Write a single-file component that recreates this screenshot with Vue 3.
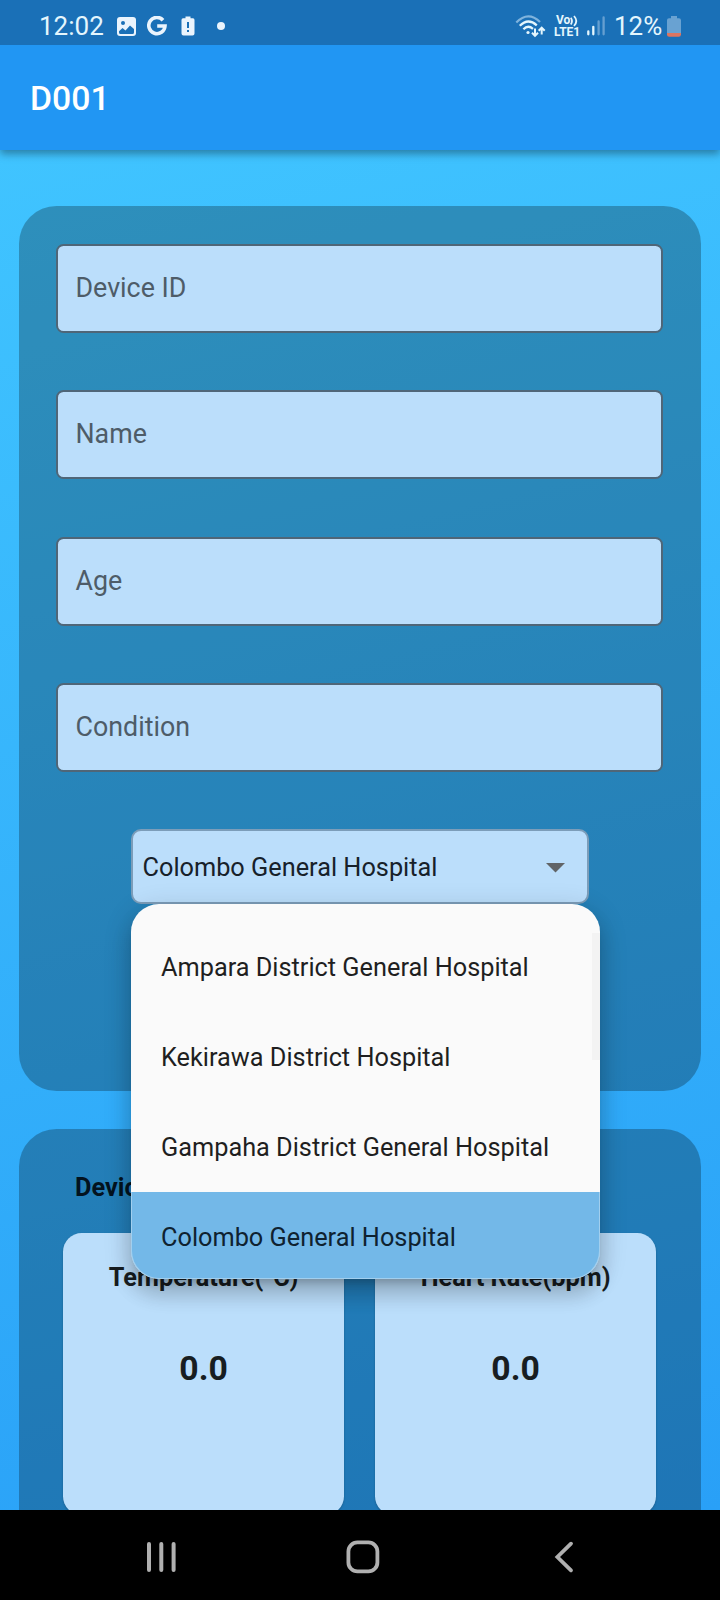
<script setup>
const fields = ['Device ID', 'Name', 'Age', 'Condition']
const selected = 'Colombo General Hospital'
const hospitals = [
  'Ampara District General Hospital',
  'Kekirawa District Hospital',
  'Gampaha District General Hospital',
  'Colombo General Hospital',
]
const readings = [
  { label: 'Temperature(°C)', value: '0.0' },
  { label: 'Heart Rate(bpm)', value: '0.0' },
]
</script>

<template>
  <div class="screen">
    <div class="status">
      <span class="clock">12:02</span>
      <svg class="ic-photo" width="19" height="19" viewBox="0 0 19 19">
        <rect width="19" height="19" rx="3" fill="#eaf4fd" />
        <circle cx="6" cy="6" r="2" fill="#1a70b7" />
        <path d="M2 14.2 L5.5 11 L8.5 13.5 L13 8.5 L17 12 V15.5 Q17 17 15.5 17 H3.5 Q2 17 2 15.5 Z" fill="#1a70b7" />
      </svg>
      <svg class="ic-g" width="20" height="20" viewBox="0 0 20 20" fill="none" stroke="#eaf4fd" stroke-width="3.6">
        <path d="M16 4.2 A8.1 8.1 0 1 0 18 10 H10.2" />
      </svg>
      <svg class="ic-alert" width="14" height="20" viewBox="0 0 14 20">
        <path d="M4.5 0.5 H9.5 V2.2 H12 Q13.5 2.2 13.5 4 V17.5 Q13.5 19.5 11.5 19.5 H2.5 Q0.5 19.5 0.5 17.5 V4 Q0.5 2.2 2 2.2 H4.5 Z" fill="#eaf4fd" />
        <path d="M7 6 V12 M7 14 V16" stroke="#1a70b7" stroke-width="2" />
      </svg>
      <span class="dot"></span>
      <span class="spacer"></span>
      <svg class="ic-wifi" width="31" height="24" viewBox="0 0 31 24" fill="none">
        <path d="M1.3 8.5 Q13 -3.5 25 8" stroke="#7fb3dd" stroke-width="2.2" />
        <path d="M4.8 11.8 Q13 3.5 21.8 11.3" stroke="#e4f6fd" stroke-width="2.3" />
        <path d="M8.4 15.3 Q13 10.6 18 14.8" stroke="#e4f6fd" stroke-width="2.3" />
        <circle cx="13" cy="18.5" r="1.6" fill="#e4f6fd" />
        <path d="M20 14.5 V22 M17 18.7 L20 21.9 L23 18.7 M26.7 20.5 V13.5 M23.7 16.8 L26.7 13.6 L29.7 16.8" stroke="#e4f6fd" stroke-width="2" />
      </svg>
      <span class="volte">
        <span class="vo">Vo<svg width="9" height="12" viewBox="0 0 9 12" fill="none" stroke="#e4f6fd" stroke-width="1.8"><path d="M0.8 2.8 Q3.2 6 0.8 9.4 M4 1 Q8.6 6 4 11" /></svg></span>
        <span class="lte">LTE1</span>
      </span>
      <svg class="ic-signal" width="19" height="20" viewBox="0 0 19 20" stroke-width="2.3" stroke-linecap="round">
        <path d="M2.3 15.5 V18.3 M7.3 10.8 V18.3" stroke="#e4f6fd" />
        <path d="M12.6 5.5 V18.3 M17.6 1.5 V18.3" stroke="#659fd1" />
      </svg>
      <span class="percent">12%</span>
      <svg class="ic-battery" width="14" height="21" viewBox="0 0 14 21">
        <path d="M4 0 H10 V2.2 H12 Q14 2.2 14 4.2 V17 H0 V4.2 Q0 2.2 2 2.2 H4 Z" fill="#69a2d2" />
        <path d="M0 17 H14 V18.5 Q14 20.7 11.8 20.7 H2.2 Q0 20.7 0 18.5 Z" fill="#dd7561" />
      </svg>
    </div>

    <header class="appbar"><h1>D001</h1></header>

    <main class="body">
      <section class="card form">
        <div v-for="f in fields" :key="f" class="field">{{ f }}</div>
        <div class="select">
          <div class="select-box">
            <span>{{ selected }}</span>
            <svg width="19" height="10" viewBox="0 0 19 10"><path d="M0 0 H19 L9.5 9.5 Z" fill="#616467" /></svg>
          </div>
          <ul class="menu">
            <li v-for="h in hospitals" :key="h" :class="{ active: h === selected }">{{ h }}</li>
            <li class="thumb" aria-hidden="true"></li>
          </ul>
        </div>
      </section>

      <section class="card data">
        <h2>Device</h2>
        <div class="tiles">
          <div v-for="r in readings" :key="r.label" class="tile">
            <div class="label">{{ r.label }}</div>
            <div class="value">{{ r.value }}</div>
          </div>
        </div>
      </section>
    </main>

    <nav class="nav">
      <svg class="recents" width="30" height="32" viewBox="0 0 30 32" stroke="#b0b0b0" stroke-width="4" stroke-linecap="round">
        <path d="M3 3 V29 M15.3 3 V29 M27.6 3 V29" />
      </svg>
      <svg class="home" width="34" height="34" viewBox="0 0 34 34">
        <rect x="2.4" y="2.4" width="29" height="29" rx="9" fill="none" stroke="#b0b0b0" stroke-width="3.8" />
      </svg>
      <svg class="back" width="20" height="32" viewBox="0 0 20 32">
        <path d="M17 2.7 L3.4 16 L17 29.3" fill="none" stroke="#b0b0b0" stroke-width="3.8" stroke-linecap="round" />
      </svg>
    </nav>
  </div>
</template>

<style>
body {
  background: #000;
}
</style>

<style scoped>
.screen {
  width: 720px;
  height: 1600px;
  display: flex;
  flex-direction: column;
  overflow: hidden;
  font-family: Roboto, sans-serif;
  color: #1f1f1f;
}
.screen * {
  box-sizing: border-box;
}
svg {
  display: block;
  flex: none;
}
.status {
  height: 45px;
  flex: none;
  display: flex;
  align-items: flex-start;
  background: #1a70b7;
  color: #e4f6fd;
  z-index: 3;
}
.clock,
.percent {
  font-size: 26px;
  line-height: 30px;
  margin-top: 11px;
}
.clock {
  width: 78px;
  margin-left: 39px;
}
.ic-photo {
  margin-top: 17px;
}
.ic-g {
  margin: 16px 0 0 11px;
}
.ic-alert {
  margin: 16px 0 0 14px;
}
.dot {
  width: 8px;
  height: 8px;
  border-radius: 50%;
  background: #eaf4fd;
  margin: 22px 0 0 22px;
}
.spacer {
  flex: 1;
}
.ic-wifi {
  margin-top: 14px;
}
.volte {
  width: 28px;
  margin: 15px 0 0 8px;
  font-weight: 700;
}
.vo {
  display: flex;
  align-items: center;
  padding-left: 2px;
  font-size: 12px;
  line-height: 11px;
  height: 11px;
}
.lte {
  display: block;
  font-size: 12px;
  line-height: 12px;
}
.ic-signal {
  margin: 16px 0 0 4px;
}
.percent {
  width: 51px;
  margin-left: 9px;
  white-space: nowrap;
}
.ic-battery {
  margin: 16px 39px 0 2px;
}
.appbar {
  height: 105px;
  flex: none;
  display: flex;
  align-items: center;
  padding: 2px 0 0 30px;
  background: #2196f3;
  box-shadow: 0 4px 8px rgba(0, 0, 0, 0.35);
  z-index: 2;
}
h1 {
  margin: 0;
  font-size: 33.75px;
  font-weight: 500;
  line-height: 40px;
  color: #fff;
}
.body {
  flex: 1;
  min-height: 0;
  overflow: hidden;
  display: flex;
  flex-direction: column;
  gap: 37.5px;
  padding: 56.25px 18.75px 0;
  background: linear-gradient(166deg, #40c4ff, #29a0f7);
}
.card {
  flex: none;
  border-radius: 37.5px;
  background: rgba(0, 0, 0, 0.262);
}
.form {
  position: relative;
  z-index: 1;
  height: 885px;
  display: flex;
  flex-direction: column;
  gap: 57.25px;
  padding: 37.75px 38.25px 0 37.75px;
}
.field {
  height: 89px;
  flex: none;
  display: flex;
  align-items: center;
  margin-left: -0.5px;
  padding: 0 18px 1px 17.5px;
  border: 2px solid #4f6678;
  border-radius: 7.5px;
  background: #bbdefb;
  color: #4e5c68;
  font-size: 26.8px;
}
.select {
  position: relative;
  width: 458px;
  height: 75px;
  margin-left: 74.5px;
}
.select-box {
  height: 75px;
  display: flex;
  align-items: center;
  justify-content: space-between;
  padding: 2px 22.5px 0 9.5px;
  border: 2px solid #7c9db9;
  border-radius: 10px;
  background: #bbdefb;
  color: #17212a;
  font-size: 25.3px;
}
.menu {
  position: absolute;
  top: 75px;
  left: 0;
  width: 469px;
  height: 375px;
  margin: 0;
  padding: 18px 0 0;
  list-style: none;
  overflow: hidden;
  border-radius: 28px;
  background: #fafafa;
  box-shadow: 0 9px 9px -6px rgba(0, 0, 0, 0.2), 0 15px 19px 2px rgba(0, 0, 0, 0.14), 0 6px 26px 4px rgba(0, 0, 0, 0.12);
}
.menu::after {
  content: '';
  position: absolute;
  inset: 288px 0 0;
  border: 1px solid rgba(250, 250, 250, 0.35);
  border-top: 0;
  border-radius: 0 0 28px 28px;
}
.menu li {
  height: 90px;
  display: flex;
  align-items: center;
  padding-left: 30px;
  font-size: 25.3px;
  white-space: nowrap;
}
.menu li.active {
  background: #73b8e8;
  color: #0f2230;
}
.menu li.thumb {
  position: absolute;
  top: 29px;
  right: 0;
  width: 8px;
  height: 127px;
  padding: 0;
  background: #f3f3f3;
}
.data {
  height: 500px;
  padding: 44px 44.25px 0;
}
h2 {
  margin: 0 0 0 12px;
  font-size: 25.3px;
  line-height: 30px;
  font-weight: 700;
  color: #03131f;
}
.tiles {
  display: flex;
  gap: 30.75px;
  margin-top: 30.5px;
}
.tile {
  width: 281.25px;
  height: 281.25px;
  border-radius: 18.75px;
  background: #bbdefb;
  box-shadow: 0 1px 2px rgba(0, 0, 0, 0.25);
  text-align: center;
  font-weight: 700;
  color: #171d21;
  padding-top: 29.5px;
}
.label {
  font-size: 25.3px;
  line-height: 30px;
}
.value {
  margin-top: 56px;
  font-size: 33.75px;
  line-height: 40px;
}
.nav {
  height: 90px;
  flex: none;
  display: flex;
  align-items: center;
  background: #000;
  padding-top: 3px;
  z-index: 2;
}
.recents {
  margin-left: 146px;
}
.home {
  margin-left: 169.5px;
}
.back {
  margin-left: 174.5px;
}
</style>
